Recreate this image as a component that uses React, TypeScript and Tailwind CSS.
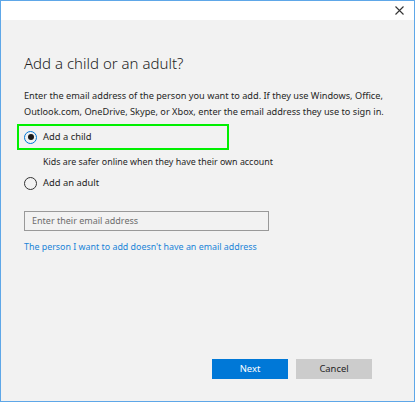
import React from "react";

export default function App() {
  const font = { fontFamily: '"Noto Sans", "Open Sans", sans-serif' };
  return (
    <div className="w-[416px] h-[403px] bg-white" style={font}>
      <div className="w-[415px] h-[402px] border border-[#5ea7e8] flex flex-col bg-[#f2f2f2]">
        <div className="h-[19px] bg-white flex items-center justify-end pr-[10px] shrink-0">
          <svg width="9" height="9" viewBox="0 0 9 9">
            <path d="M0.5 0.5 L8.5 8.5 M8.5 0.5 L0.5 8.5" stroke="#333" strokeWidth="1.1" />
          </svg>
        </div>
        <div className="flex-1 flex flex-col pl-[23px] pr-[20px]">
          <div className="mt-[31px] text-[15px] leading-[24px] font-light text-[#1f1f1f]">
            Add a child or an adult?
          </div>
          <div className="mt-[13px] text-[9.2px] leading-[16px] text-[#262626]">
            Enter the email address of the person you want to add. If they use Windows, Office, Outlook.com, OneDrive, Skype, or Xbox, enter the email address they use to sign in.
          </div>
          <div className="mt-[4px] ml-[-7px] w-[212px] h-[26px] border-2 border-[#00f000] flex items-center pl-[5px]">
            <span className="w-[13px] h-[13px] rounded-full border-[1.5px] border-[#0078d7] flex items-center justify-center">
              <span className="w-[6px] h-[6px] rounded-full bg-[#1a1a1a]" />
            </span>
            <span className="ml-[6px] text-[9.4px] text-[#1f1f1f]">Add a child</span>
          </div>
          <div className="mt-[4px] pl-[19px] text-[8.9px] leading-[16px] text-[#262626]">
            Kids are safer online when they have their own account
          </div>
          <div className="mt-[3px] h-[20px] flex items-center">
            <span className="w-[13px] h-[13px] rounded-full border-[1.5px] border-[#333333]" />
            <span className="ml-[6px] text-[9.4px] text-[#1f1f1f]">Add an adult</span>
          </div>
          <div className="mt-[18px] w-[245px] h-[20px] border border-[#999999] bg-[#f2f2f2] flex items-center pl-[7px] text-[9px] text-[#6d6d6d]">
            Enter their email address
          </div>
          <div className="mt-[8px] text-[8.9px] leading-[16px] text-[#1a84d8]">
            The person I want to add doesn't have an email address
          </div>
          <div className="flex-1" />
          <div className="flex justify-end gap-[8px] pr-[22px] mb-[22px]">
            <div className="w-[76px] h-[20px] bg-[#0078d7] text-white text-[9.4px] flex items-center justify-center">
              Next
            </div>
            <div className="w-[76px] h-[20px] bg-[#cccccc] text-[#1f1f1f] text-[9.4px] flex items-center justify-center">
              Cancel
            </div>
          </div>
        </div>
      </div>
    </div>
  );
}
